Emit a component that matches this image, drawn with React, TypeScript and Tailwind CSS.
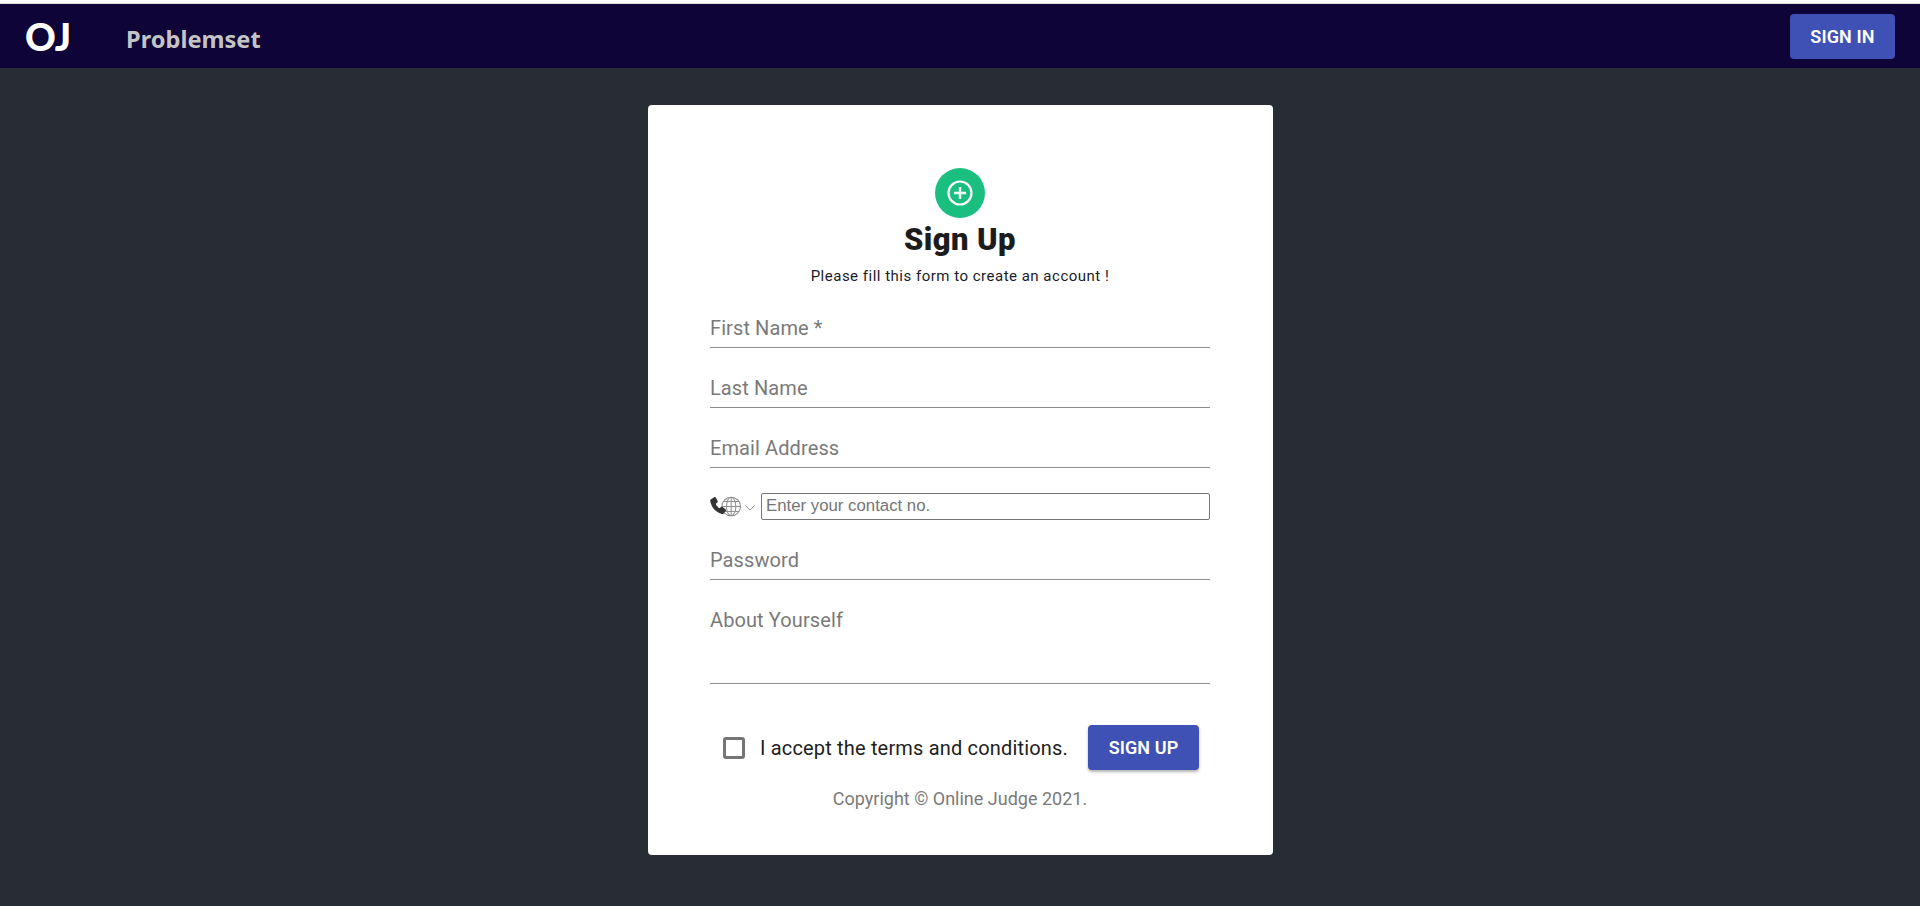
import React from "react";

function Field({ label, className }: { label: string; className: string }) {
  return (
    <div className={`flex items-start border-b border-[#8c8c8c] text-[20px] leading-[23px] tracking-[0.1px] text-[#7a7a7a] ${className}`}>
      {label}
    </div>
  );
}

function PhoneIcon() {
  return (
    <svg width="32" height="21" viewBox="0 0 31 20" fill="none">
      <circle cx="20.5" cy="10" r="9" fill="#fff" stroke="#8f8f8f" strokeWidth="1" />
      <ellipse cx="20.5" cy="10" rx="4.5" ry="9" stroke="#8f8f8f" strokeWidth="1" />
      <path d="M20.5 1v18M11.5 10h18M13 5.2h15M13 14.8h15" stroke="#8f8f8f" strokeWidth="1" />
      <path
        d="M1 3 4 1c.7-.4 1.3-.2 1.6.4l1.8 3.2c.3.6.1 1.1-.3 1.5L5.6 7.4c.6 1.9 1.9 3.4 3.8 4.4l1.2-1.2c.4-.4 1-.5 1.5-.1l3 2.1c.5.4.6 1.1.2 1.6l-2.1 2.6c-.4.5-1.1.7-1.8.4C5.2 15.4 1.3 10.7.2 4.6.1 3.9.4 3.3 1 3Z"
        fill="#333"
      />
    </svg>
  );
}

export default function App() {
  return (
    <div className="flex h-[906px] flex-col overflow-hidden bg-[#282c34] font-['Roboto',sans-serif]">
      <div className="h-1 shrink-0 border-b border-[#dddddd] bg-white" />
      <header className="flex h-[64px] shrink-0 items-center bg-[#0f0437] pl-[25px] pr-[25px]">
        <span className="w-[101px] font-['Lato',sans-serif] text-[38px] font-black leading-none text-white">OJ</span>
        <span className="pt-[8px] font-['Noto_Sans',sans-serif] text-[23.6px] font-bold leading-none text-[#c4c4c4]">Problemset</span>
        <button className="ml-auto h-[45px] w-[105px] rounded bg-[#3f51b5] text-[18px] font-semibold tracking-[0.1px] text-white">SIGN IN</button>
      </header>
      <main className="flex flex-1 justify-center pt-[37px]">
        <div className="flex h-[750px] w-[625px] flex-col items-center rounded bg-white px-[62px] pt-[63px]">
          <div className="flex h-[50px] w-[50px] items-center justify-center rounded-full bg-[#1abf80]">
            <svg width="26" height="26" viewBox="0 0 26 26" fill="none" stroke="#fff">
              <circle cx="13" cy="13" r="11.5" strokeWidth="2.2" />
              <path d="M13 7v12M7 13h12" strokeWidth="2.4" />
            </svg>
          </div>
          <h1 className="mt-[3px] text-[31px] font-black leading-[38px] tracking-[0.4px] text-[#1c1c1c]">Sign Up</h1>
          <p className="mt-[7px] text-[15px] leading-[21px] tracking-[0.5px] text-[#1b1b2b]">Please fill this form to create an account !</p>
          <form className="mt-[27px] flex w-[500px] flex-col">
            <Field label="First Name *" className="h-[34px] pt-[3px]" />
            <Field label="Last Name" className="mt-[26px] h-[34px] pt-[3px]" />
            <Field label="Email Address" className="mt-[26px] h-[34px] pt-[3px]" />
            <div className="mt-[25px] flex h-[27px] items-center">
              <PhoneIcon />
              <svg width="12" height="8" viewBox="0 0 12 8" fill="none" className="ml-[2px] mt-[3px]">
                <path d="M1.5 1.5 6 6l4.5-4.5" stroke="#9a9a9a" strokeWidth="1" />
              </svg>
              <div className="ml-[5px] flex h-[27px] flex-1 items-center rounded-[2px] border border-[#767676] pl-[4px] font-['Liberation_Sans',sans-serif] text-[16.8px] leading-none text-[#757575]">
                Enter your contact no.
              </div>
            </div>
            <Field label="Password" className="mt-[26px] h-[34px] pt-[3px]" />
            <Field label="About Yourself" className="mt-[26px] h-[78px] pt-[3px]" />
            <div className="mt-[41px] flex h-[45px] items-center">
              <div className="ml-[13px] h-[22px] w-[22px] rounded-[3px] border-[3px] border-[#757575]" />
              <span className="ml-[15px] text-[20px] leading-none tracking-[0.17px] text-[#212121]">I accept the terms and conditions.</span>
              <button type="button" className="ml-auto mr-[11px] h-[45px] w-[111px] rounded bg-[#3f51b5] text-[18px] font-semibold tracking-[0.1px] text-white shadow-[0_2px_3px_rgba(0,0,0,0.3)]">SIGN UP</button>
            </div>
            <p className="mt-[17px] text-center text-[18px] leading-[24px] text-[#7a7a7a]">Copyright © Online Judge 2021.</p>
          </form>
        </div>
      </main>
    </div>
  );
}
